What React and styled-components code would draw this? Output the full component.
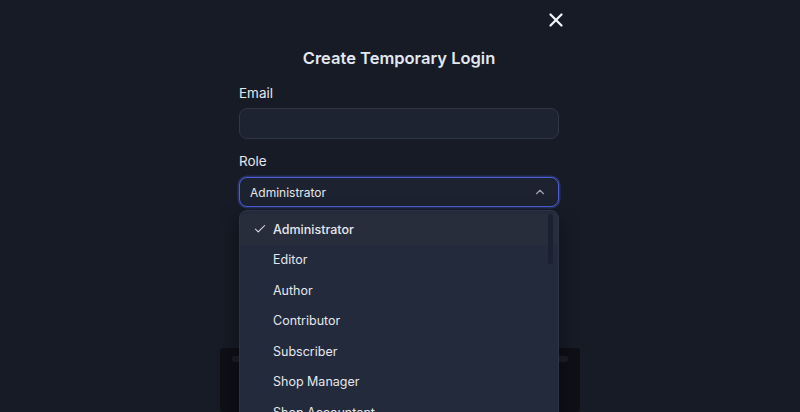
import React from 'react'
import styled, { createGlobalStyle } from 'styled-components'
import { X, Check, ChevronUp } from 'lucide-react'

const GlobalStyle = createGlobalStyle`
  html, body {
    margin: 0;
    padding: 0;
    background: #171b26;
    font-family: Inter, "Noto Sans", "Liberation Sans", sans-serif;
    -webkit-font-smoothing: antialiased;
  }
  * { box-sizing: border-box; }
`

const Page = styled.div`
  width: 800px;
  height: 412px;
  overflow: hidden;
  display: flex;
  flex-direction: column;
  align-items: center;
  padding-right: 2px;
`

const TopBar = styled.div`
  width: 360px;
  display: flex;
  justify-content: flex-end;
  padding: 9px 12px 0 0;
`

const CloseButton = styled.button`
  border: none;
  background: transparent;
  padding: 0;
  color: #f1f5f9;
  display: flex;
  cursor: pointer;
`

const Title = styled.h2`
  margin: 15px 0 0;
  font-size: 16.5px;
  line-height: 24px;
  font-weight: 600;
  color: #e2e8f0;
`

const Form = styled.div`
  width: 320px;
  margin-top: 14px;
  display: flex;
  flex-direction: column;
`

const Label = styled.label`
  font-size: 13.5px;
  line-height: 18px;
  color: #e5e7eb;
  margin-bottom: ${p => p.$gap || '6px'};
`

const Input = styled.div`
  height: 31px;
  border-radius: 8px;
  background: #1e2331;
  border: 1px solid #2f3646;
  margin-bottom: 13px;
`

const SelectWrap = styled.div`
  position: relative;
`

const SelectTrigger = styled.div`
  height: 30px;
  border-radius: 8px;
  background: #1d2230;
  border: 1.5px solid #4a5ed0;
  box-shadow: 0 0 0 1.5px rgba(52, 68, 150, 0.55);
  display: flex;
  align-items: center;
  justify-content: space-between;
  padding: 0 11px 0 10px;
  font-size: 12px;
  color: #e5e7eb;
`

const Menu = styled.div`
  position: absolute;
  top: 33px;
  left: 0;
  width: 320px;
  height: 230px;
  border-radius: 8px;
  background: #222a3b;
  border: 1px solid #2c3445;
  box-shadow: 0 8px 20px rgba(0, 0, 0, 0.45);
  overflow: hidden;
  padding-top: 3px;
  z-index: 2;
`

const Scrollbar = styled.div`
  position: absolute;
  right: 5px;
  top: 3px;
  width: 5px;
  height: 50px;
  border-radius: 3px;
  background: #1b2131;
  z-index: 1;
`

const Item = styled.div`
  height: 30.5px;
  display: flex;
  align-items: center;
  padding-left: 33px;
  position: relative;
  font-size: 12.5px;
  color: #e5e7eb;
  font-weight: ${p => (p.$selected ? 500 : 400)};
  background: ${p => (p.$selected ? '#282d3c' : 'transparent')};
`

const CheckMark = styled.span`
  position: absolute;
  left: 13px;
  top: 8px;
  display: flex;
  color: #e5e7eb;
`

const Footer = styled.div`
  width: 360px;
  height: 80px;
  margin: 141px 0 0 2px;
  background: #0e1015;
  border-radius: 4px;
  padding: 8px 12px 0;
`

const FooterStrip = styled.div`
  height: 6px;
  border-radius: 3px;
  background: linear-gradient(90deg, #1c1e22, #2a2c2f 50%, #1c1e22);
`

const roles = [
  'Administrator',
  'Editor',
  'Author',
  'Contributor',
  'Subscriber',
  'Shop Manager',
  'Shop Accountant',
]

export default function App() {
  const selected = 'Administrator'
  return (
    <Page>
      <GlobalStyle />
      <TopBar>
        <CloseButton aria-label="Close">
          <X size={22} strokeWidth={2.5} />
        </CloseButton>
      </TopBar>
      <Title>Create Temporary Login</Title>
      <Form>
        <Label $gap="6px">Email</Label>
        <Input />
        <Label $gap="7px">Role</Label>
        <SelectWrap>
          <SelectTrigger>
            <span>{selected}</span>
            <ChevronUp size={14} strokeWidth={2} color="#9ca3af" />
          </SelectTrigger>
          <Menu>
            <Scrollbar />
            {roles.map(r => (
              <Item key={r} $selected={r === selected}>
                {r === selected && (
                  <CheckMark>
                    <Check size={14} strokeWidth={1.8} />
                  </CheckMark>
                )}
                {r}
              </Item>
            ))}
          </Menu>
        </SelectWrap>
      </Form>
      <Footer>
        <FooterStrip />
      </Footer>
    </Page>
  )
}
